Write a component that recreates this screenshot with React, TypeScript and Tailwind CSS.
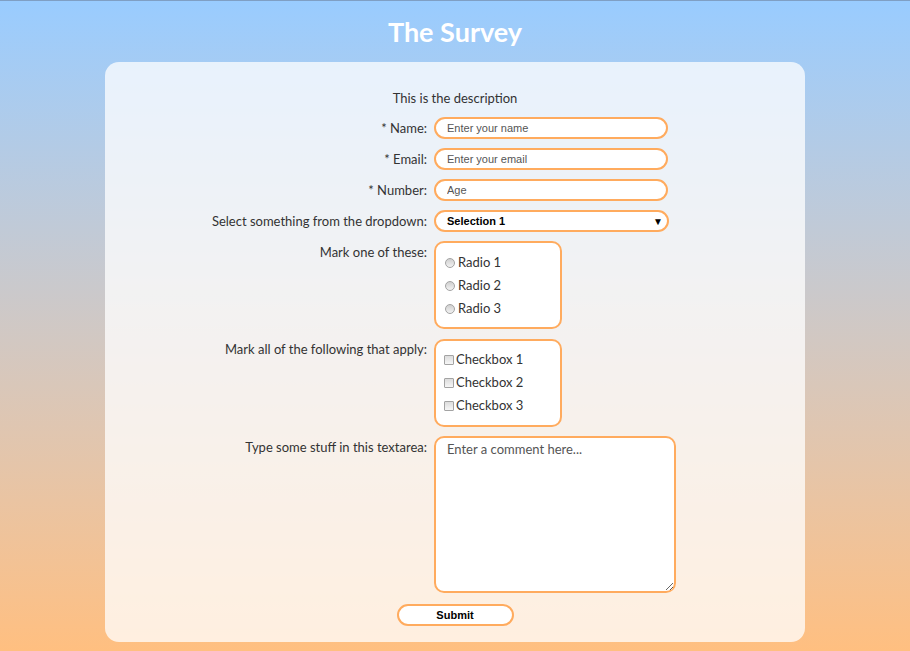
import React from 'react';

const field =
    'w-[234px] h-[22px] rounded-full border-2 border-[#ffab5e] bg-white pl-[11px] text-[11px] text-[#222] outline-none placeholder:text-[#555] font-["Liberation_Sans",Arial,sans-serif]';

const Row: React.FC<{ label: string; children: React.ReactNode }> = ({ label, children }) => (
    <div className="flex items-start">
        <label className="w-[329px] shrink-0 pr-[7px] text-right text-[13px] leading-[22px] text-[#333]">{label}</label>
        {children}
    </div>
);

const Radio = () => (
    <span className="inline-block w-[10px] h-[10px] rounded-full border border-[#a3a3a3] bg-gradient-to-b from-[#cfcfcf] to-[#f2f2f2]"></span>
);

const Check = () => (
    <span className="inline-block w-[10px] h-[10px] rounded-[1px] border border-[#a3a3a3] bg-gradient-to-b from-[#dcdcdc] to-[#f6f6f6]"></span>
);

const App: React.FC = () => {
    return (
        <div className="min-h-screen border-t border-[#7f9fc4] bg-gradient-to-b from-[#99ccff] to-[#ffbf80] pb-[9px] font-['Lato','Open_Sans',sans-serif]">
            <h1 className="pt-[15px] pb-[14px] text-center text-[27px] font-bold leading-[32px] text-white">The Survey</h1>

            <div className="mx-auto w-[700px] rounded-[14px] bg-white/75 pt-[26px] pb-[16px]">
                <p className="text-center text-[13px] leading-[20px] text-[#333]">This is the description</p>

                <form className="mt-[9px] flex flex-col gap-[9px]" onSubmit={(e) => e.preventDefault()}>
                    <Row label="* Name:">
                        <input className={field} placeholder="Enter your name" />
                    </Row>
                    <Row label="* Email:">
                        <input className={field} placeholder="Enter your email" />
                    </Row>
                    <Row label="* Number:">
                        <input className={field} placeholder="Age" />
                    </Row>
                    <Row label="Select something from the dropdown:">
                        <div className="flex w-[235px] h-[22px] items-center justify-between rounded-full border-2 border-[#ffab5e] bg-white pl-[11px] pr-[4px] font-['Liberation_Sans',Arial,sans-serif] text-[11px] font-bold text-black">
                            <span>Selection 1</span>
                            <span className="text-[10px]">▼</span>
                        </div>
                    </Row>

                    <Row label="Mark one of these:">
                        <div className="flex h-[88px] w-[128px] flex-col rounded-[10px] border-2 border-[#ffab5e] bg-white pl-[9px] pt-[8px]">
                            {['Radio 1', 'Radio 2', 'Radio 3'].map((r) => (
                                <div key={r} className="flex h-[23px] items-center gap-[3px] text-[13px] text-[#333]">
                                    <Radio />
                                    <span>{r}</span>
                                </div>
                            ))}
                        </div>
                    </Row>

                    <Row label="Mark all of the following that apply:">
                        <div className="mt-[1px] flex h-[88px] w-[128px] flex-col rounded-[10px] border-2 border-[#ffab5e] bg-white pl-[8px] pt-[7px]">
                            {['Checkbox 1', 'Checkbox 2', 'Checkbox 3'].map((c) => (
                                <div key={c} className="flex h-[23px] items-center gap-[2px] text-[13px] text-[#333]">
                                    <Check />
                                    <span>{c}</span>
                                </div>
                            ))}
                        </div>
                    </Row>

                    <Row label="Type some stuff in this textarea:">
                        <textarea
                            className="h-[157px] w-[242px] rounded-[10px] border-2 border-[#ffab5e] bg-white px-[11px] pt-[2px] text-[13px] text-[#333] outline-none placeholder:text-[#555]"
                            placeholder="Enter a comment here..."
                        />
                    </Row>

                    <div className="mt-[2px] flex justify-center">
                        <button
                            type="submit"
                            className="h-[22px] w-[117px] rounded-full border-2 border-[#ffab5e] bg-white font-['Liberation_Sans',Arial,sans-serif] text-[11px] font-bold text-black"
                        >
                            Submit
                        </button>
                    </div>
                </form>
            </div>
        </div>
    );
};

export default App;
